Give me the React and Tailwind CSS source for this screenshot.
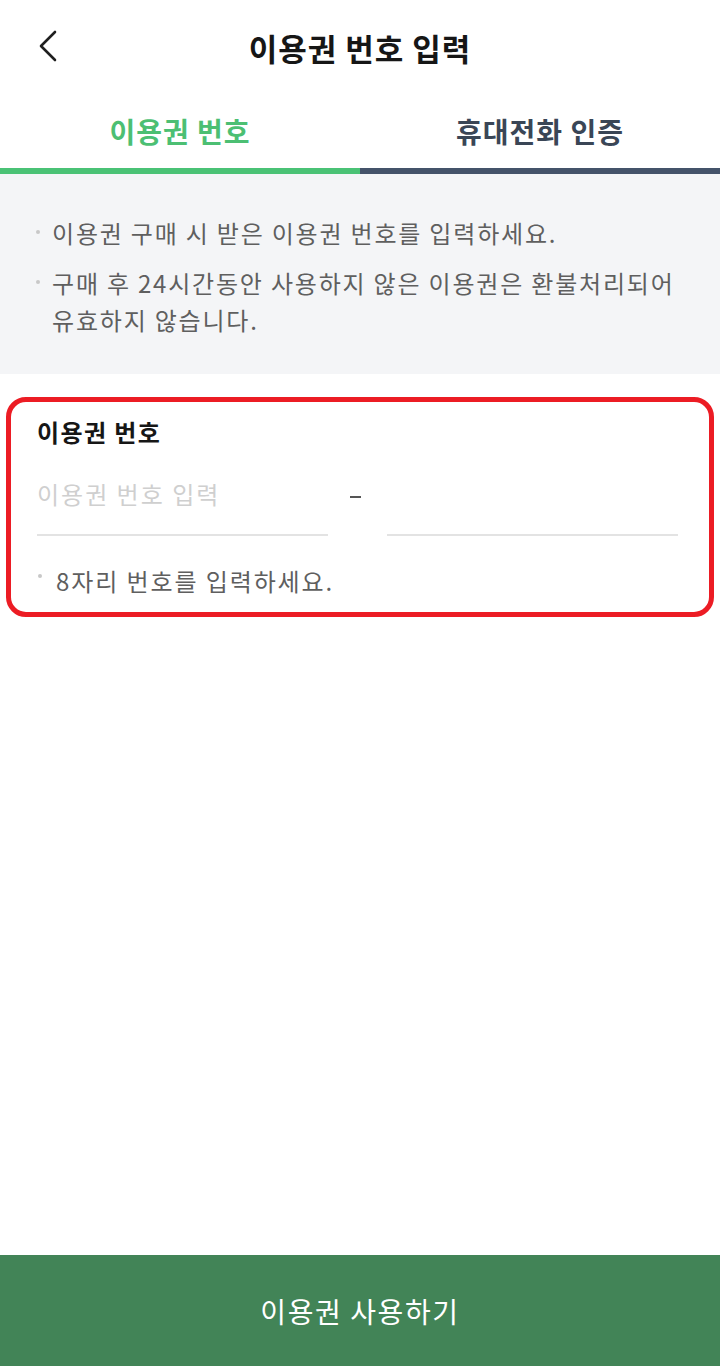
import React from "react";

const font = { fontFamily: '"Noto Sans CJK KR", "Noto Sans", sans-serif' };

function Bullet({ children }) {
  return (
    <div className="flex">
      <span className="mt-[16px] mr-[12px] ml-[2px] h-[4px] w-[4px] shrink-0 rounded-full bg-[#c8c8c8]" />
      <p className="text-[24px] leading-[37px] tracking-[1.8px] text-[#5f5f5f]">{children}</p>
    </div>
  );
}

export default function App() {
  return (
    <div className="flex h-[1366px] w-[720px] flex-col bg-white" style={font}>
      <header className="relative flex h-[96px] items-center justify-center">
        <button className="absolute left-[36px] top-[26px] h-[40px] w-[30px]">
          <svg width="24" height="36" viewBox="0 0 24 36" fill="none">
            <path d="M19 4 L5 18 L19 32" stroke="#1f1f1f" strokeWidth="2.6" strokeLinecap="round" strokeLinejoin="round" />
          </svg>
        </button>
        <h1 className="text-[31px] font-bold tracking-[1px] text-[#161616]">이용권 번호 입력</h1>
      </header>

      <div className="flex h-[72px]">
        <div className="flex flex-1 items-center justify-center pb-[2px] text-[28px] font-bold tracking-[1px] text-[#4cbf73]">이용권 번호</div>
        <div className="flex flex-1 items-center justify-center pb-[2px] text-[28px] font-bold tracking-[1px] text-[#3a4656]">휴대전화 인증</div>
      </div>
      <div className="flex h-[6px]">
        <div className="flex-1 bg-[#4ac275]" />
        <div className="flex-1 bg-[#44536a]" />
      </div>

      <section className="flex h-[200px] flex-col gap-[13px] bg-[#f4f5f7] pl-[34px] pr-[20px] pt-[40px]">
        <Bullet>이용권 구매 시 받은 이용권 번호를 입력하세요.</Bullet>
        <Bullet>
          구매 후 24시간동안 사용하지 않은 이용권은 환불처리되어
          <br />
          유효하지 않습니다.
        </Bullet>
      </section>

      <div className="mx-[6px] mt-[23px] rounded-[20px] border-[5px] border-[#ec1c24] pl-[26px] pr-[25px] pb-[14px] pt-[13px]">
        <div className="text-[24px] font-bold leading-[34px] tracking-[1.4px] text-[#161616]">이용권 번호</div>
        <div className="mt-[26px] flex items-start">
          <div className="w-[291px] border-b-2 border-[#e3e3e3] pb-[21px] text-[24px] leading-[38px] tracking-[2px] text-[#cfcfcf]">이용권 번호 입력</div>
          <div className="flex w-[59px] justify-center pt-[3px] pr-[4px]">
            <span className="mt-[18px] block h-[1.5px] w-[11px] bg-[#555]" />
          </div>
          <div className="h-[61px] w-[291px] border-b-2 border-[#e3e3e3]" />
        </div>
        <div className="mt-[28px] flex">
          <span className="mt-[10px] mr-[14px] ml-[1px] h-[4px] w-[4px] shrink-0 rounded-full bg-[#c8c8c8]" />
          <p className="text-[24px] leading-[34px] tracking-[1.9px] text-[#5f5f5f]">8자리 번호를 입력하세요.</p>
        </div>
      </div>

      <button className="mt-auto flex h-[111px] w-full items-center justify-center bg-[#428457] text-[28px] tracking-[1.6px] text-white">
        이용권 사용하기
      </button>
    </div>
  );
}
